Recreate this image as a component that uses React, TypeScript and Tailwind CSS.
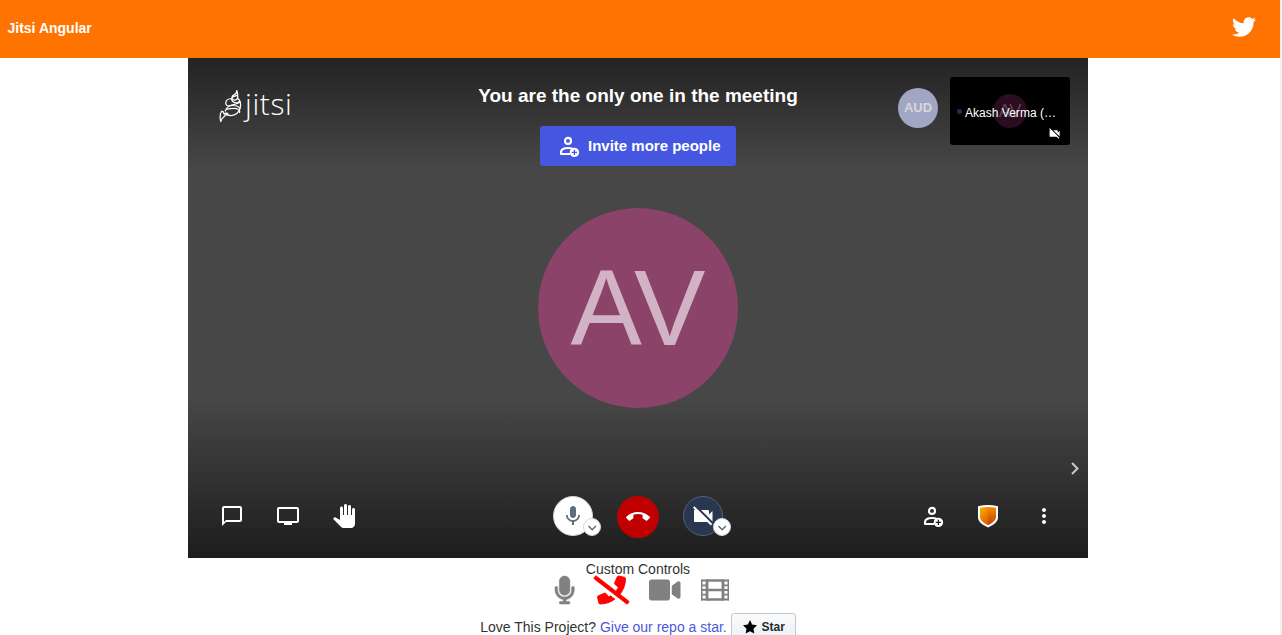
import React from "react";
import { FaTwitter, FaMicrophone, FaPhoneSlash, FaVideo } from "react-icons/fa";
import { MdChatBubbleOutline, MdPersonalVideo, MdPanTool, MdMic, MdCallEnd, MdMoreVert } from "react-icons/md";

function JitsiMark() {
  return (
    <svg width="24" height="34" viewBox="0 0 24 34" fill="none" stroke="white" strokeWidth="1.250" strokeLinecap="round" strokeLinejoin="round">
      <path d="M17.800 1.500c.3 2.300-1.300 3.500-2.700 4.300-1.800.8-2.400 2.200-1.800 3.700.6 1.600 2.600 2.200 4.200 1.100 2-1.400 1.600-4.600.3-9.100zM13.800 7.800l4.200-1.500" />
      <path d="M12.500 9.500c-3 .2-5.500 1.700-5.700 4.200-.2 2 1 3.300 3.200 3.300M12.500 10c.2 3.300 5.500 5.200 8 2.500M18.500 9c2.600 2.300 3.600 5.500 2.800 9.500-.8 4.500-4.600 8-9.300 8-2.200 0-4.500-.6-5.900-2" />
      <path d="M6.300 22c1-3.500 4.700-5.700 8.700-5.500 2.600.1 4.800 1.100 6 2.700M10 17c3.500-1.500 7.500-1.700 10.700-3.800M7.500 20c3.600.3 7.800-2 11.500.2 1.600 1 2 2.300 1.500 3.300" />
      <path d="M1.800 32.500c-1.200-4-.5-8 .8-10.300 1.300.2 2.400 1.300 2.600 3 1.200-.8 2.300-1.300 3.600-.9-2.300 2.700-5.800 3.200-7 8.200z" />
    </svg>
  );
}

function InviteIcon({ plus }: { plus: string }) {
  return (
    <svg width="24" height="24" viewBox="0 0 24 24" fill="none">
      <circle cx="12" cy="6.900" r="3" stroke="white" strokeWidth="2.100" />
      <path d="M14 20H5v-2c0-2.700 3-4 7-4 2 0 3.800.4 5 1.200" stroke="white" strokeWidth="2.100" strokeLinejoin="round" />
      <circle cx="18.400" cy="18.400" r="4.700" fill="white" />
      <path d="M18.400 15.700v5.400M15.700 18.400h5.400" stroke={plus} strokeWidth="1.300" />
    </svg>
  );
}

function CameraOff({ size, cut }: { size: number; cut: string }) {
  return (
    <svg width={size} height={size} viewBox="0 0 24 24" fill="none">
      <path d="M3 6h14q1 0 1 1v3.500l3.500-3.500v11L18 14.500V17q0 1-1 1H4q-1 0-1-1z" fill="white" />
      <path d="M4.500 2 22 19.500" stroke={cut} strokeWidth="2.200" />
      <path d="M2.700 3 20.500 20.800" stroke="white" strokeWidth="2" />
    </svg>
  );
}

function Film() {
  return (
    <svg width="28" height="28" viewBox="0 0 28 28" fill="none" stroke="#808080">
      <path d="M.75 3.500v21M27.250 3.500v21" strokeWidth="1.500" />
      <path d="M6 3.500v21M22 3.500v21" strokeWidth="2.800" />
      <path d="M0 4.500h6M0 9.300h6M0 14h6M0 18.700h6M0 23.500h6M22 4.500h6M22 9.300h6M22 14h6M22 18.700h6M22 23.500h6" strokeWidth="1.800" />
      <path d="M6 4.600h16M6 14h16M6 23.400h16" strokeWidth="2.500" />
    </svg>
  );
}

function Caret() {
  return (
    <span className="absolute -right-[9px] -bottom-px flex h-[18px] w-[18px] items-center justify-center rounded-full border border-[#d5d8dd] bg-white">
      <svg width="10" height="8" viewBox="0 0 10 8" fill="none" stroke="#5e6d7a" strokeWidth="1.500">
        <path d="m1.500 3 3.700 3.700 3.700-3.700" />
      </svg>
    </span>
  );
}

function Shield() {
  return (
    <svg width="24" height="24" viewBox="0 0 24 24">
      <defs>
        <linearGradient id="left" x1="0" y1="0" x2=".5" y2="1"><stop stopColor="#ffb000" /><stop offset="1" stopColor="#e06500" /></linearGradient>
        <linearGradient id="right" x1="0" y1="0" x2="0" y2="1"><stop stopColor="#f58d00" /><stop offset="1" stopColor="#bd4300" /></linearGradient>
      </defs>
      <path d="M2 2.200Q12 0 22 2.200V14q0 5-10 9.500Q2 19 2 14z" fill="white" />
      <path d="M4 3.700Q8 2.900 12 2.900v18.300Q4 17.500 4 13.300z" fill="url(#left)" />
      <path d="M12 2.900q4 0 8 .8v9.600q0 4.200-8 7.900z" fill="url(#right)" />
    </svg>
  );
}

function TopBar() {
  return (
    <header className="flex h-[58px] items-center justify-between bg-[#ff7400] pl-[7.500px] pr-6 text-white">
      <h1 className="-mt-0.5 text-sm font-bold">Jitsi Angular</h1>
      <FaTwitter className="-mt-1 h-6 w-6" />
    </header>
  );
}

function Meeting() {
  return (
    <section className="mx-auto h-[500px] w-[900px] translate-x-[-2px] bg-[linear-gradient(to_bottom,#232323_0px,#474747_112px,#474747_340px,#1d1d1d_500px)] text-white">
      <div className="grid h-[150px] grid-cols-[290px_320px_290px]">
        <div className="flex items-start pt-[31px] pl-[31px]">
          <JitsiMark />
          <span className="-mt-[5px] ml-[2px] font-['Open_Sans',sans-serif] text-[30px] leading-[40px] font-light tracking-[.6px]">jitsi</span>
        </div>
        <div className="flex flex-col items-center pt-6">
          <h2 className="text-[19px] leading-7 font-bold whitespace-nowrap">You are the only one in the meeting</h2>
          <button className="mt-4 flex h-10 w-[196px] items-center rounded-[3px] bg-[#4557e1] pl-4 text-[15px] font-bold whitespace-nowrap">
            <InviteIcon plus="#4557e1" />
            <span className="ml-2">Invite more people</span>
          </button>
        </div>
        <div className="flex items-start justify-end gap-3 pt-[19px] pr-[18px]">
          <div className="mt-[11px] flex h-10 w-10 items-center justify-center rounded-full bg-[#a1a6c4] text-[13px] font-bold text-[#d8d8d8]">AUD</div>
          <div className="relative flex h-[68px] w-[120px] items-center justify-center rounded-[3px] bg-black">
            <div className="flex h-[34px] w-[34px] items-center justify-center rounded-full bg-[#2b0c20] text-[18px] text-[#554852]">AV</div>
            <div className="absolute inset-x-[7px] top-[27px] flex items-center text-xs leading-[18px] text-white">
              <span className="mr-[3px] -mt-[3px] h-[5px] w-[5px] rounded-full bg-[#292957]" />
              <span className="tracking-[.02px] whitespace-nowrap">Akash Verma (…</span>
            </div>
            <div className="absolute right-[9px] bottom-[5px]"><CameraOff size={13} cut="#000000" /></div>
          </div>
        </div>
      </div>
      <div className="mx-auto flex h-[200px] w-[200px] items-center justify-center rounded-full bg-[#8b4369] text-[107px] leading-none text-[#d2b3c5]">
        <span>AV</span>
      </div>
      <div className="flex h-[88px] items-end justify-end pr-[5px] pb-5">
        <svg width="16" height="16" viewBox="0 0 16 16" fill="none" stroke="#c9c9c9" strokeWidth="2"><path d="m5 3 5.500 5.500L5 14" /></svg>
      </div>
      <div className="grid h-[42px] grid-cols-3 items-center px-8">
        <div className="-mt-0.5 flex gap-8">
          <MdChatBubbleOutline className="h-6 w-6" />
          <MdPersonalVideo className="h-6 w-6" />
          <MdPanTool className="h-6 w-6" />
        </div>
        <div className="flex items-start justify-center gap-6">
          <div className="relative flex h-10 w-10 items-center justify-center rounded-full border border-[#d1d5db] bg-white text-[#5e6d7a]"><MdMic className="h-6 w-6" /><Caret /></div>
          <div className="flex h-[42px] w-[42px] items-center justify-center rounded-full bg-[#c00000]"><MdCallEnd className="h-6 w-6" /></div>
          <div className="relative flex h-10 w-10 items-center justify-center rounded-full border border-[#566176] bg-[#2a3750]"><CameraOff size={24} cut="#2a3750" /><Caret /></div>
        </div>
        <div className="-mt-0.5 flex justify-end gap-8"><InviteIcon plus="#242424" /><Shield /><MdMoreVert className="h-6 w-6" /></div>
      </div>
    </section>
  );
}

function CustomControls() {
  return (
    <footer className="flex translate-x-[-2px] flex-col items-center pt-[2px] text-sm leading-[18px] text-[#333]">
      <div>Custom Controls</div>
      <div className="-mt-[2px] ml-2 flex h-7 items-start gap-5 text-[#808080]">
        <FaMicrophone className="h-7 w-[19.25px] overflow-visible stroke-current stroke-[10]" />
        <FaPhoneSlash className="h-7 w-[35px] overflow-visible stroke-current stroke-[16] text-[#ff0000]" />
        <FaVideo className="h-7 w-[31.500px]" />
        <Film />
      </div>
      <div className="mt-[9px] flex items-center gap-1">
        <span>Love This Project? <a className="text-[#4b58dc]">Give our repo a star.</a></span>
        <button className="flex h-7 w-[65px] items-center justify-center gap-[5px] rounded-[3px] border border-[#c5c8cc] bg-[linear-gradient(#fafbfc,#ebf0f4)] pl-px text-xs font-bold text-[#24292f]">
          <svg width="14" height="14" viewBox="0 0 14 14" fill="black"><path d="m7 0 2.100 4.500 4.900.7-3.500 3.500.8 4.900L7 11.300l-4.300 2.300.8-4.900L0 5.200l4.900-.7z" /></svg>
          Star
        </button>
      </div>
    </footer>
  );
}

export default function App() {
  return (
    <div className="flex h-[635px] w-[1282px] overflow-hidden bg-white font-['Liberation_Sans',Arial,sans-serif]">
      <main className="w-[1280px]"><TopBar /><Meeting /><CustomControls /></main>
      <div className="w-0.5 bg-[#f1f1f1]" />
    </div>
  );
}
